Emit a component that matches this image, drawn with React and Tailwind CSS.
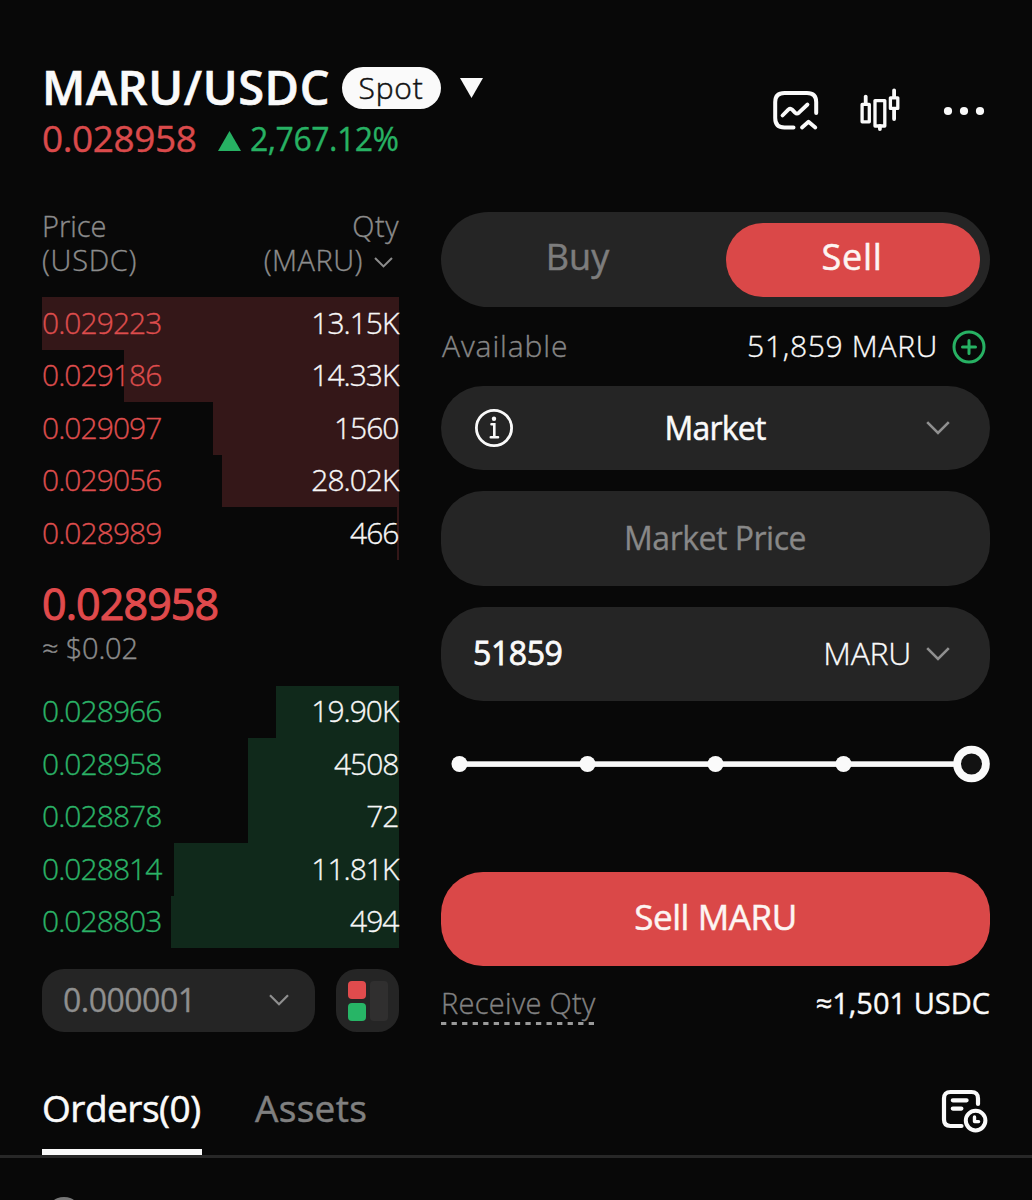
import {
  useState
} from 'react'

const asks = [
  { price: '0.029223', qty: '13.15K', depth: 357 },
  { price: '0.029186', qty: '14.33K', depth: 275 },
  { price: '0.029097', qty: '1560', depth: 186 },
  { price: '0.029056', qty: '28.02K', depth: 177 },
  { price: '0.028989', qty: '466', depth: 2 }
]

const bids = [
  { price: '0.028966', qty: '19.90K', depth: 123 },
  { price: '0.028958', qty: '4508', depth: 151 },
  { price: '0.028878', qty: '72', depth: 151 },
  { price: '0.028814', qty: '11.81K', depth: 225 },
  { price: '0.028803', qty: '494', depth: 228 }
]

function Chevron({ className }) {
  return (
    <svg
      viewBox="0 0 24 14"
      fill="none"
      stroke="currentColor"
      strokeWidth="2.6"
      className={className}
    >
      <path d="M1.2 1.2 L12 12 L22.8 1.2" />
    </svg>
  )
}

function ChartIcon() {
  return (
    <svg
      viewBox="0 0 46 42"
      fill="none"
      stroke="currentColor"
      strokeWidth="4"
      strokeLinecap="round"
      strokeLinejoin="round"
      className="h-[42px] w-[46px]"
    >
      <path d="M43.2 23 V12 Q43.2 3 34 3 H11.5 Q2.2 3 2.2 12 V28 Q2.2 37.5 11.5 37.5 H20.5" />
      <path d="M9.5 25.5 L15.3 19.6 Q17.3 17.8 19.2 19.6 L22 22.6 Q23.9 24.4 25.9 22.7 L34.5 14.5" strokeWidth="3.8" />
      <path d="M29 37.5 L35.5 31.8 L42.3 37.5" strokeWidth="3.8" />
    </svg>
  )
}

function CandlesIcon() {
  return (
    <svg
      viewBox="0 0 40 43"
      fill="none"
      stroke="currentColor"
      strokeWidth="3.3"
      strokeLinecap="round"
      strokeLinejoin="round"
      className="h-[43px] w-[40px]"
    >
      <rect x="2.1" y="16.4" width="7.2" height="17.4" />
      <path d="M5.7 8.6 V16" strokeWidth="3.8" />
      <rect x="15" y="12.6" width="9.8" height="25.4" />
      <path d="M19.9 38 V41" strokeWidth="3.8" />
      <rect x="30.4" y="9.8" width="7.4" height="10.6" />
      <path d="M34.1 2.3 V9 M34.1 21 V31" strokeWidth="3.8" />
    </svg>
  )
}

function OrdersIcon() {
  return (
    <svg
      viewBox="0 0 47 44"
      fill="none"
      stroke="currentColor"
      strokeWidth="4.2"
      strokeLinecap="round"
      strokeLinejoin="round"
      className="h-[44px] w-[47px]"
    >
      <path d="M37 15 V9.5 Q37 3 30.5 3 H9.5 Q3 3 3 9.5 V30.5 Q3 37 9.5 37 H20.5" />
      <path d="M11.8 11.3 H25.6 M11.8 19.6 H20.4" />
      <circle cx="34.6" cy="31.6" r="9.8" strokeWidth="4" />
      <path d="M33.5 28 V32.6 H37.6" strokeWidth="3.4" />
    </svg>
  )
}

function BookRow({
  row,
  textColor,
  barColor
}) {
  return (
    <div className="relative flex h-[52.5px] items-center justify-between pb-px text-[30px] font-light [-webkit-text-stroke:0.35px]">

      <div
        className={`absolute inset-y-0 right-0 ${barColor}`}
        style={{ width: row.depth }}
      />

      <span className={`relative tracking-[-0.95px] ${textColor}`}>
        {row.price}
      </span>

      <span className="relative pr-[0.6px] tracking-[-1px] text-[#f8f8f8]">
        {row.qty}
      </span>

    </div>
  )
}

export default function App() {
  const [side, setSide] =
    useState('sell')

  return (
    <main className="h-[1200px] w-[1032px] overflow-hidden bg-[#080808] font-['Open_Sans',sans-serif] leading-none whitespace-nowrap text-[#fafafa]">

      {/* Header */}
      <header className="flex h-[212px] justify-between pr-[47px] pl-[42px]">

        <div className="pt-[62px]">

          <div className="flex h-[52px] items-center">

            <h1 className="w-[299.5px] pb-px text-[47px] font-semibold tracking-[0.6px] [-webkit-text-stroke:0.6px]">
              MARU/USDC
            </h1>

            <span className="flex h-[42px] w-[99px] items-center justify-center rounded-full bg-[#fafafa] text-[30px] font-light tracking-[0.8px] text-[#111] [-webkit-text-stroke:0.5px]">
              Spot
            </span>

            <svg viewBox="0 0 23 20" fill="currentColor" className="ml-[19px] h-5 w-[23px]">
              <path d="M0 0 H23 L11.5 20 Z" />
            </svg>

          </div>

          <div className="flex h-[50px] items-center">

            <span className="w-[176px] pb-1 text-[37px] tracking-[-0.4px] text-[#da4a4b] [-webkit-text-stroke:0.4px]">
              0.028958
            </span>

            <svg viewBox="0 0 23 20" className="mt-1 h-5 w-[23px] fill-[#27b163]">
              <path d="M0 20 H23 L11.5 0 Z" />
            </svg>

            <span className="ml-[9px] pb-px text-[32px] tracking-[-0.5px] text-[#27b163] [-webkit-text-stroke:0.35px]">
              2,767.12%
            </span>

          </div>

        </div>

        <div className="flex pt-[88px]">

          <div className="mt-0.5 mr-[41px]">
            <ChartIcon />
          </div>

          <CandlesIcon />

          <svg viewBox="0 0 42 10" fill="currentColor" className="mt-[18px] ml-[43px] h-[10px] w-[42px]">
            <circle cx="5" cy="5" r="4.1" />
            <circle cx="21" cy="5" r="4.1" />
            <circle cx="37" cy="5" r="4.1" />
          </svg>

        </div>

      </header>

      <div className="flex h-[848px] gap-[42px] px-[42px]">

        {/* Order book */}
        <section className="w-[357px]">

          <div className="flex h-[85px] justify-between text-[29px] leading-[34px] font-light text-[#8c8c8c] [-webkit-text-stroke:0.35px]">

            <div className="-mt-[3px]">
              Price
              <div className="tracking-[0.7px]">
                (USDC)
              </div>
            </div>

            <div className="-mt-[3px] text-right">
              <span className="tracking-[0.5px]">
                Qty
              </span>
              <div className="flex items-center tracking-[0.5px]">
                (MARU)
                <Chevron className="mt-1 mr-[6px] ml-[11px] h-[11px] w-[19px]" />
              </div>
            </div>

          </div>

          {asks.map(
            (row) => (
              <BookRow
                key={row.price}
                row={row}
                textColor="text-[#de4d4d]"
                barColor="bg-[#341718]"
              />
            )
          )}

          <div className="h-[126px] pt-[22px]">

            <p className="text-[43px] tracking-[-0.9px] text-[#e04a4c] [-webkit-text-stroke:1px]">
              0.028958
            </p>

            <p className="mt-2 text-[29px] font-light tracking-[-0.2px] text-[#8c8c8c] [-webkit-text-stroke:0.4px]">
              ≈ $0.02
            </p>

          </div>

          {bids.map(
            (row) => (
              <BookRow
                key={row.price}
                row={row}
                textColor="text-[#2bb367]"
                barColor="bg-[#10291b]"
              />
            )
          )}

          <div className="mt-[21px] flex justify-between">

            <button className="flex h-[63px] w-[273px] items-center justify-between rounded-[22px] bg-[#252525] pr-[26px] pb-px pl-[21px] text-[32px] tracking-[-0.5px] text-[#8f8f8f] [-webkit-text-stroke:0.3px]">
              0.000001
              <Chevron className="h-[12px] w-[20px]" />
            </button>

            <button className="flex h-[63px] w-[63px] items-center justify-center gap-1 rounded-[21px] bg-[#252525]">

              <div className="grid gap-1">
                <div className="h-[18px] w-[18px] rounded-[4px] bg-[#e04b4d]" />
                <div className="h-[18px] w-[18px] rounded-[4px] bg-[#27b566]" />
              </div>

              <div className="h-10 w-[18px] rounded-[4px] bg-[#302f2f]" />

            </button>

          </div>

        </section>

        {/* Trade form */}
        <section className="w-[549px]">

          <div className="flex h-[95px] items-center rounded-full bg-[#252525] pr-[10px] text-[36px] [-webkit-text-stroke:0.5px]">

            <button
              onClick={() =>
                setSide('buy')
              }
              className="w-[285px] pr-3 pb-1.5 text-[#7d7d7d]"
            >
              Buy
            </button>

            <button
              onClick={() =>
                setSide('sell')
              }
              aria-pressed={side === 'sell'}
              className="h-[74px] w-[254px] rounded-full bg-[#da4848] pr-0.5 pb-1.5 tracking-[0.7px] text-[#fdf5f2]"
            >
              Sell
            </button>

          </div>

          <div className="flex h-[79px] items-center text-[30px] font-light [-webkit-text-stroke:0.35px]">

            <span className="pb-0.5 pl-px tracking-[0.9px] text-[#868686]">
              Available
            </span>

            <span className="ml-auto pb-0.5 tracking-[0.7px]">
              51,859 MARU
            </span>

            <svg
              viewBox="0 0 34 34"
              fill="none"
              strokeWidth="3"
              strokeLinecap="round"
              className="mr-1 ml-[14px] h-[34px] w-[34px] stroke-[#27b163]"
            >
              <circle cx="17" cy="17" r="15" />
              <path d="M10.5 17 H23.5 M17 10.5 V23.5" />
            </svg>

          </div>

          <button className="flex h-[84px] w-full items-center rounded-full bg-[#252525] pr-10 pl-[33px]">

            <svg
              viewBox="0 0 40 40"
              fill="none"
              stroke="currentColor"
              strokeWidth="2.8"
              strokeLinecap="round"
              className="h-10 w-10"
            >
              <circle cx="20" cy="20" r="17.6" />
              <circle cx="20" cy="10.7" r="2.2" fill="currentColor" stroke="none" />
              <path d="M17.5 16.2 H20.3 V29 M16.8 29.3 H24" strokeWidth="2.6" />
            </svg>

            <span className="flex-1 pr-2.5 text-[32px] tracking-[-0.8px] [-webkit-text-stroke:0.5px]">
              Market
            </span>

            <Chevron className="h-[14px] w-6 text-[#909090]" />

          </button>

          <div className="mt-[21px] flex h-[95px] items-center justify-center rounded-[42px] bg-[#252525] pr-px pb-0.5 text-[32px] tracking-[-0.5px] text-[#888] [-webkit-text-stroke:0.3px]">
            Market Price
          </div>

          <div className="mt-[21px] flex h-[94px] items-center rounded-[42px] bg-[#252525] pr-10 pl-8 text-[32px]">

            <span className="pb-0.5 tracking-[-0.4px] [-webkit-text-stroke:0.8px]">
              51859
            </span>

            <span className="ml-auto pb-0.5 font-light tracking-[-0.3px] [-webkit-text-stroke:0.35px]">
              MARU
            </span>

            <Chevron className="ml-[15px] h-[14px] w-6 text-[#909090]" />

          </div>

          {/* Amount slider */}
          <svg viewBox="0 0 549 38" fill="currentColor" className="mt-[44px] h-[38px] w-[549px]">
            <rect x="18" y="16.3" width="500" height="5.6" />
            <circle cx="18.5" cy="19" r="8" />
            <circle cx="146.5" cy="19" r="8" />
            <circle cx="274.5" cy="19" r="8" />
            <circle cx="402.5" cy="19" r="8" />
            <circle cx="530.5" cy="19" r="14.4" className="fill-[#121212]" stroke="currentColor" strokeWidth="7.8" />
          </svg>

          <button className="mt-[89px] h-[94px] w-full rounded-[42px] bg-[#da4848] pb-[5px] text-[35px] tracking-[-0.4px] text-[#fdf5f2] [-webkit-text-stroke:0.5px]">
            Sell MARU
          </button>

          <div className="flex h-[75px] items-center justify-between text-[29px]">

            <span className="mt-[6px]">
              <span className="block font-light tracking-[0.3px] text-[#828282] [-webkit-text-stroke:0.35px]">
                Receive Qty
              </span>
              <svg viewBox="0 0 153 3" className="mt-[5px] h-[3px] w-[153px] stroke-[#9a9a9a]">
                <path d="M0 1.5 H153" strokeWidth="3" strokeDasharray="5.3 5.25" />
              </svg>
            </span>

            <span className="pb-0.5 [-webkit-text-stroke:0.4px]">
              ≈1,501 USDC
            </span>

          </div>

        </section>

      </div>

      {/* Tabs */}
      <nav className="flex h-[98px] items-start justify-between border-b-[3px] border-[#272727] pr-11 pl-[42px] text-[37px] [-webkit-text-stroke:0.5px]">

        <div className="flex h-[95px] gap-[53px]">

          <button className="h-full w-[160px] border-b-[6px] border-[#fafafa] pt-[5px] text-left tracking-[-0.5px]">
            Orders(0)
          </button>

          <button className="border-b-[6px] border-transparent pt-[5px] tracking-[0.3px] text-[#808080]">
            Assets
          </button>

        </div>

        <div className="mt-[29px]">
          <OrdersIcon />
        </div>

      </nav>

      <div className="mt-[39px] ml-[46px] h-9 w-9 rounded-full bg-[#777]" />

    </main>
  )
}
